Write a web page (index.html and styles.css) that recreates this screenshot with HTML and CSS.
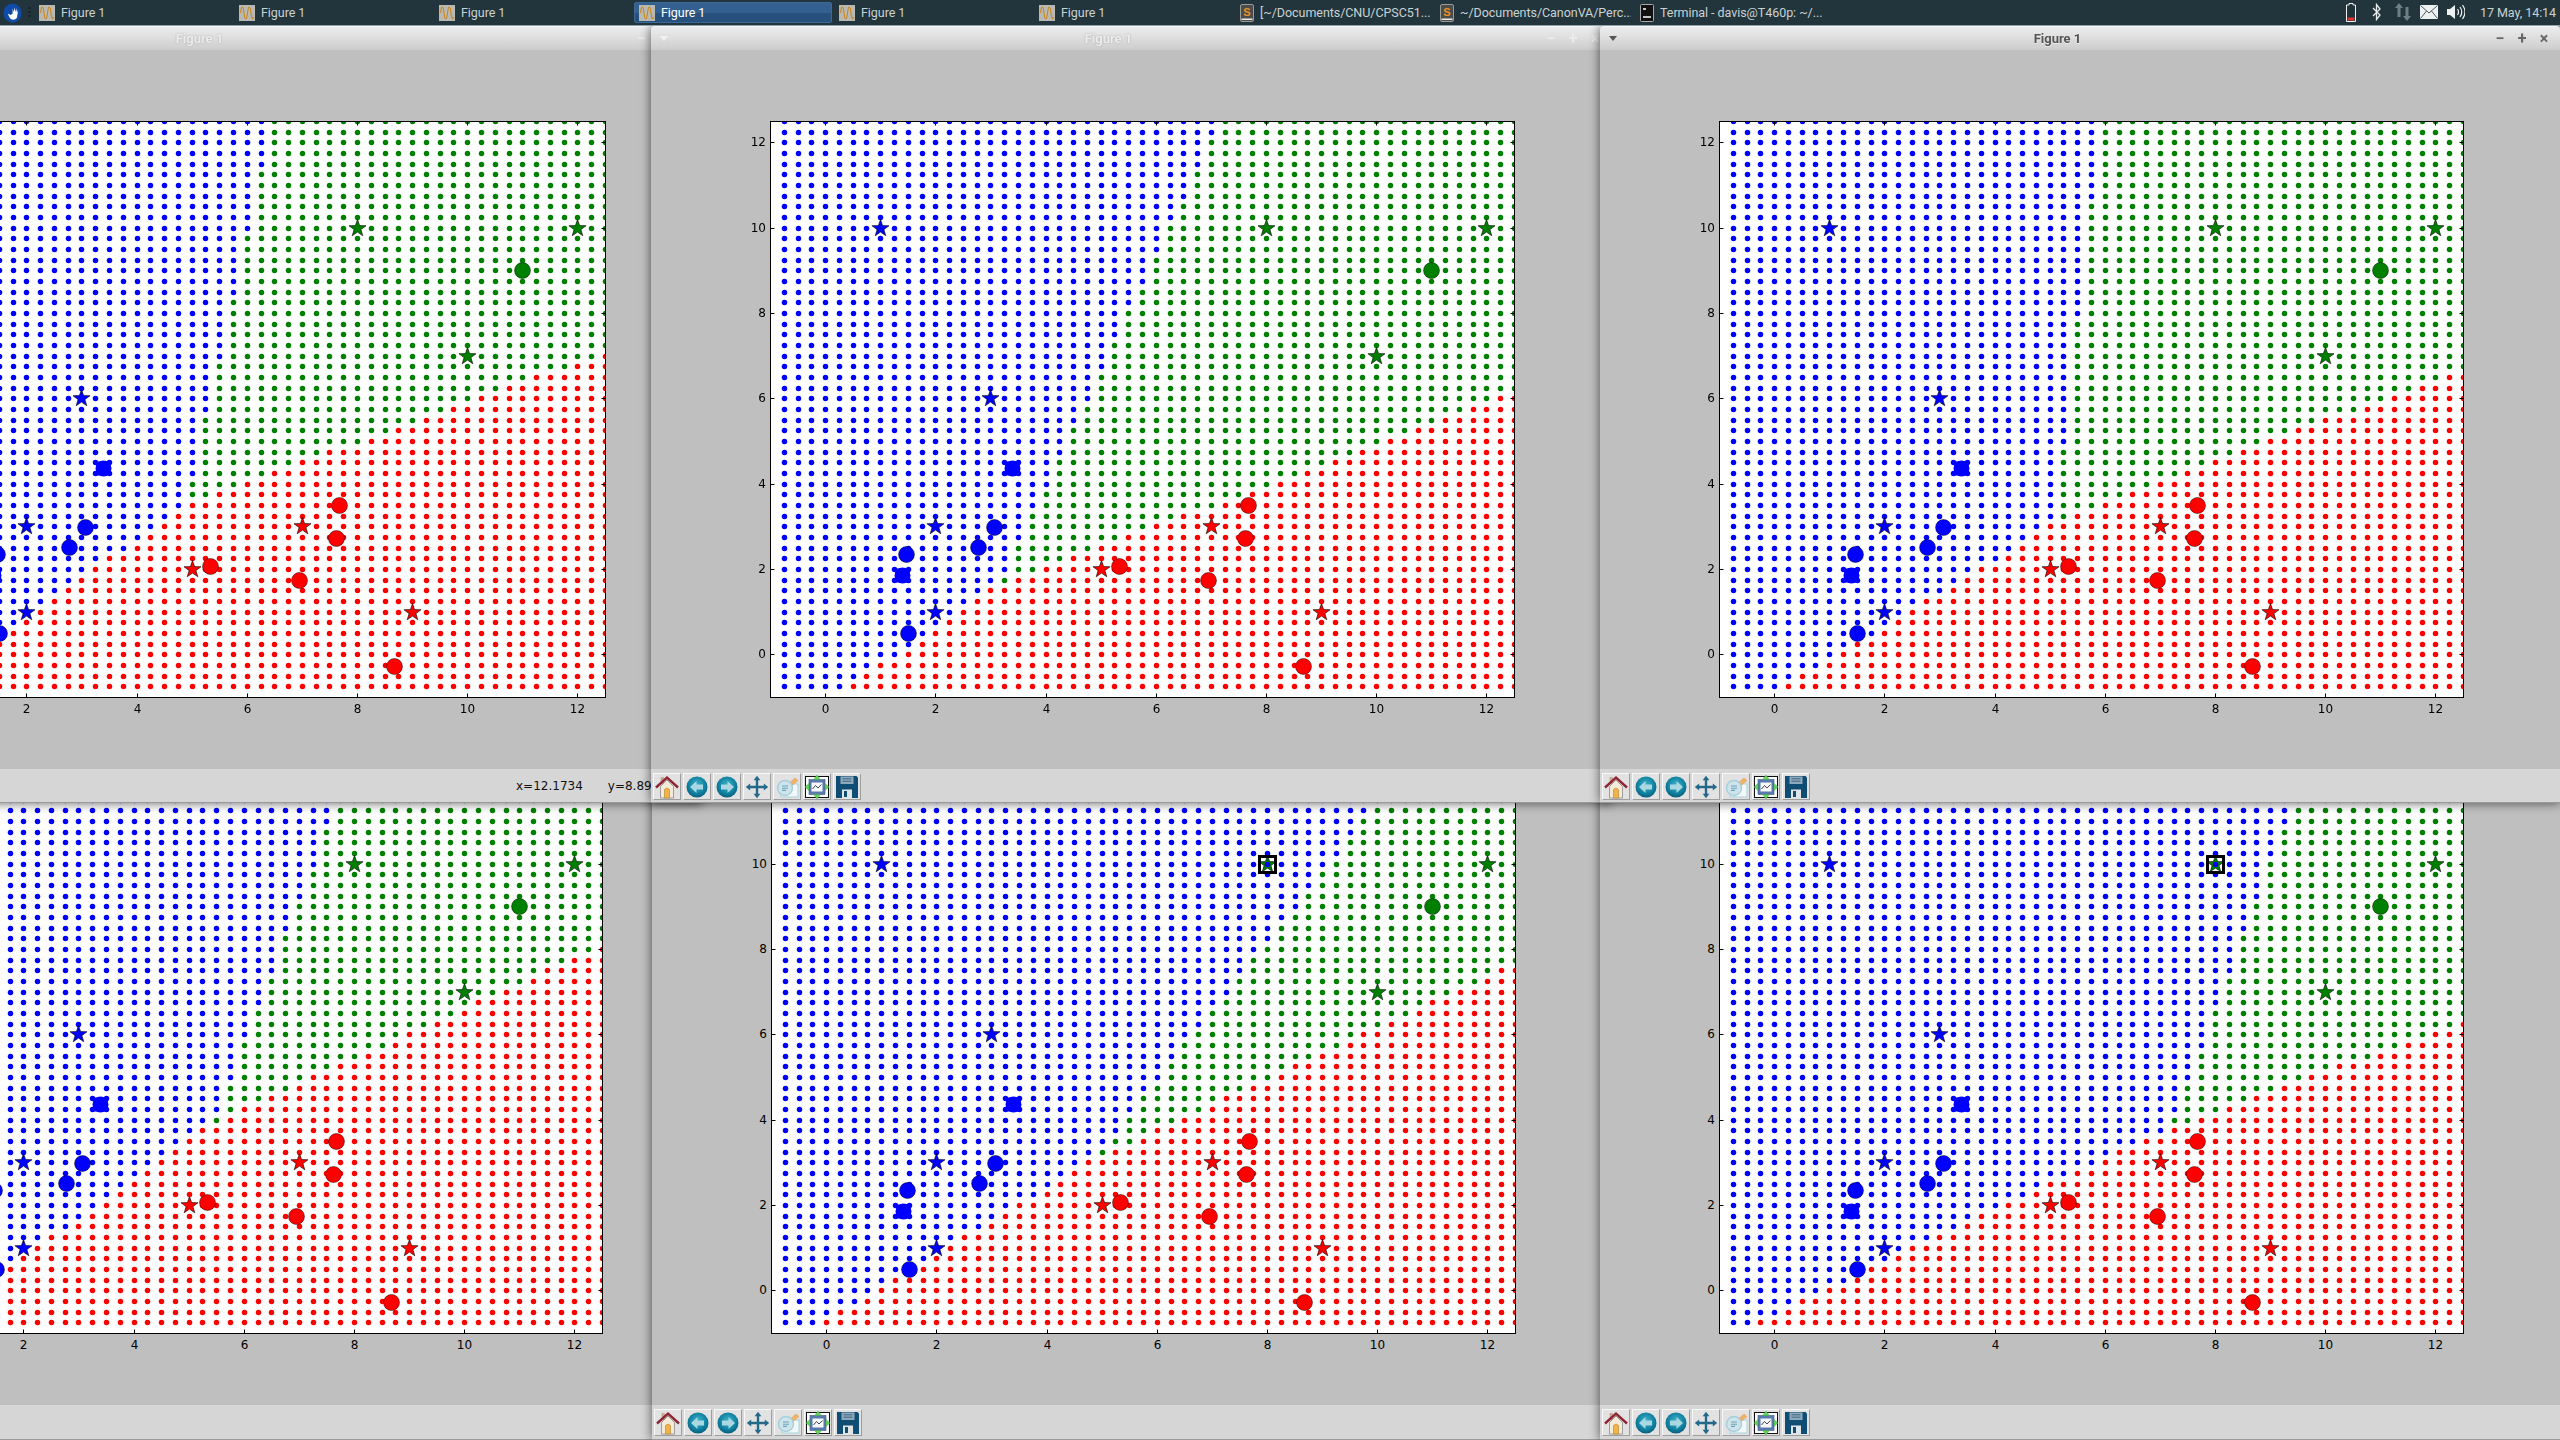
FILE: index.html
```html
<!DOCTYPE html>
<html lang="en">
<head>
<meta charset="utf-8">
<title>Desktop</title>
<link rel="stylesheet" href="styles.css">
</head>
<body>
<svg class="defs" width="0" height="0" aria-hidden="true">
  <defs>
    <radialGradient id="orb" cx="50%" cy="40%" r="60%"><stop offset="0" stop-color="#3fb4cc"/><stop offset=".7" stop-color="#0e7f9e"/><stop offset="1" stop-color="#0b5f7c"/></radialGradient>
    <symbol id="i-home" viewBox="0 0 24 24">
      <rect x="6" y="2.5" width="2.5" height="6" fill="#d9a58a" stroke="#a98" stroke-width=".5"/>
      <path d="M5.5 11.5V23h13V11.5L12 5z" fill="#f4ead8" stroke="#8a8a88" stroke-width=".8"/>
      <path d="M9.5 23V14.5q2.5-3 5 0V23z" fill="#f2b24a" stroke="#b5812f" stroke-width=".6"/>
      <path d="M1 12.5L12 2.5l11 10" fill="none" stroke="#8f2434" stroke-width="2.4"/>
    </symbol>
    <symbol id="i-back" viewBox="0 0 24 24">
      <circle cx="12" cy="12" r="10.5" fill="url(#orb)"/>
      <path d="M5 12l6.500-6v3.500H18v5h-6.500V18z" fill="#a9d8e3"/>
    </symbol>
    <symbol id="i-forward" viewBox="0 0 24 24">
      <circle cx="12" cy="12" r="10.5" fill="url(#orb)"/>
      <path d="M19 12l-6.500-6v3.500H6v5h6.500V18z" fill="#a9d8e3"/>
    </symbol>
    <symbol id="i-move" viewBox="0 0 24 24">
      <path d="M12 .8l3.4 4.4h-2.2v5.6h5.6V8.6L23.2 12l-4.4 3.4v-2.2h-5.6v5.6h2.2L12 23.2l-3.4-4.4h2.2v-5.6H5.2v2.2L.8 12l4.4-3.4v2.2h5.6V5.2H8.6z" fill="#24688a"/>
    </symbol>
    <symbol id="i-zoom" viewBox="0 0 24 24">
      <rect x="6" y="9" width="17" height="13" fill="#f3f7f8" stroke="#a5d2de" stroke-width="1"/>
      <path d="M13 9l7-6 3 2.5-7 6z" fill="#f0b26a" stroke="#e29a4c" stroke-width=".5"/>
      <circle cx="10" cy="13" r="7.5" fill="#cfe3ea" stroke="#a5cfdc" stroke-width="1.4"/>
      <path d="M7 11h6M7 13.2h6M7 15.4h4" stroke="#6aa4ba" stroke-width="1.1"/>
    </symbol>
    <symbol id="i-subplots" viewBox="0 0 24 24">
      <rect x=".5" y="1.5" width="23" height="21" fill="#fff" stroke="#111" stroke-width="1"/>
      <rect x="4" y="4.5" width="16" height="15" fill="#5a79ad" stroke="#3e5a8c" stroke-width=".6"/>
      <rect x="6.5" y="7.5" width="11" height="9" fill="#f5f7fa"/>
      <path d="M7.5 14l3-3.5 2.5 2.5 3.5-3.5" fill="none" stroke="#333" stroke-width=".9"/>
      <path d="M12 0l3.4 4.5H8.600zM12 24l3.400-4.500H8.600zM0 12l4-3.400v6.800zM24 12l-4-3.400v6.800z" fill="#62d35c" stroke="#3f9e3a" stroke-width=".4"/>
    </symbol>
    <symbol id="i-save" viewBox="0 0 24 24">
      <path d="M1 1h20.500L23 2.500V23H1z" fill="#0f4d75"/>
      <rect x="5.500" y="1.500" width="13" height="7.500" fill="#8fa9bc"/>
      <path d="M7.500 3.800h9M7.500 6.200h9" stroke="#3e6683" stroke-width="1"/>
      <rect x="7" y="14.500" width="10" height="8.500" fill="#dfe4e7"/>
      <rect x="9" y="16" width="3" height="6" fill="#0f4d75"/>
    </symbol>
    <symbol id="i-wave" viewBox="0 0 16 16">
      <rect width="16" height="16" fill="#b9b9b4"/>
      <path d="M1.500 8C2.500 0 4 0 5 8s2.500 8 3.500 0 2.500-8 3.500 0 2 6 2.500 4" fill="none" stroke="#cf8410" stroke-width="1.100"/>
    </symbol>
    <symbol id="i-sublime" viewBox="0 0 14 18">
      <rect x=".5" y=".5" width="13" height="17" rx="1.500" fill="#4c4c48" stroke="#9a9a96"/>
      <rect x="1.500" y="14.500" width="11" height="1.500" fill="#e8e8e8"/>
      <text x="7" y="12" class="sub-s" text-anchor="middle">S</text>
    </symbol>
  </defs>
</svg>

<main class="desktop">

  <section class="win w4">
    <header class="titlebar inactive"><span class="menu"></span><span class="wtitle">Figure 1</span><span class="controls"><span>−</span><span>+</span><span>×</span></span></header>
    <div class="figure"><div class="axes" data-plot="4"><canvas width="745" height="577"></canvas></div></div>
    <footer class="toolbar">
      <button class="tool"><svg><use href="#i-home"/></svg></button><button class="tool"><svg><use href="#i-back"/></svg></button><button class="tool"><svg><use href="#i-forward"/></svg></button><button class="tool"><svg><use href="#i-move"/></svg></button><button class="tool"><svg><use href="#i-zoom"/></svg></button><button class="tool"><svg><use href="#i-subplots"/></svg></button><button class="tool"><svg><use href="#i-save"/></svg></button>
    </footer>
  </section>

  <section class="win w5">
    <header class="titlebar inactive"><span class="menu"></span><span class="wtitle">Figure 1</span><span class="controls"><span>−</span><span>+</span><span>×</span></span></header>
    <div class="figure"><div class="axes" data-plot="5"><canvas width="745" height="577"></canvas></div></div>
    <footer class="toolbar">
      <button class="tool"><svg><use href="#i-home"/></svg></button><button class="tool"><svg><use href="#i-back"/></svg></button><button class="tool"><svg><use href="#i-forward"/></svg></button><button class="tool"><svg><use href="#i-move"/></svg></button><button class="tool"><svg><use href="#i-zoom"/></svg></button><button class="tool"><svg><use href="#i-subplots"/></svg></button><button class="tool"><svg><use href="#i-save"/></svg></button>
    </footer>
  </section>

  <section class="win w6">
    <header class="titlebar inactive"><span class="menu"></span><span class="wtitle">Figure 1</span><span class="controls"><span>−</span><span>+</span><span>×</span></span></header>
    <div class="figure"><div class="axes" data-plot="6"><canvas width="745" height="577"></canvas></div></div>
    <footer class="toolbar">
      <button class="tool"><svg><use href="#i-home"/></svg></button><button class="tool"><svg><use href="#i-back"/></svg></button><button class="tool"><svg><use href="#i-forward"/></svg></button><button class="tool"><svg><use href="#i-move"/></svg></button><button class="tool"><svg><use href="#i-zoom"/></svg></button><button class="tool"><svg><use href="#i-subplots"/></svg></button><button class="tool"><svg><use href="#i-save"/></svg></button>
    </footer>
  </section>

  <section class="win w1">
    <header class="titlebar inactive"><span class="menu"></span><span class="wtitle">Figure 1</span><span class="controls"><span>−</span><span>+</span><span>×</span></span></header>
    <div class="figure"><div class="axes" data-plot="1"><canvas width="745" height="577"></canvas></div></div>
    <footer class="toolbar">
      <button class="tool"><svg><use href="#i-home"/></svg></button><button class="tool"><svg><use href="#i-back"/></svg></button><button class="tool"><svg><use href="#i-forward"/></svg></button><button class="tool"><svg><use href="#i-move"/></svg></button><button class="tool"><svg><use href="#i-zoom"/></svg></button><button class="tool"><svg><use href="#i-subplots"/></svg></button><button class="tool"><svg><use href="#i-save"/></svg></button>
      <span class="coords"><span class="coord-x">x=12.1734</span><span>y=8.8970</span></span>
    </footer>
  </section>

  <section class="win w2">
    <header class="titlebar inactive"><span class="menu"></span><span class="wtitle">Figure 1</span><span class="controls"><span>−</span><span>+</span><span>×</span></span></header>
    <div class="figure"><div class="axes" data-plot="2"><canvas width="745" height="577"></canvas></div></div>
    <footer class="toolbar">
      <button class="tool"><svg><use href="#i-home"/></svg></button><button class="tool"><svg><use href="#i-back"/></svg></button><button class="tool"><svg><use href="#i-forward"/></svg></button><button class="tool"><svg><use href="#i-move"/></svg></button><button class="tool"><svg><use href="#i-zoom"/></svg></button><button class="tool"><svg><use href="#i-subplots"/></svg></button><button class="tool"><svg><use href="#i-save"/></svg></button>
    </footer>
  </section>

  <section class="win w3">
    <header class="titlebar"><span class="menu"></span><span class="wtitle">Figure 1</span><span class="controls"><span>−</span><span>+</span><span>×</span></span></header>
    <div class="figure"><div class="axes" data-plot="3"><canvas width="745" height="577"></canvas></div></div>
    <footer class="toolbar">
      <button class="tool"><svg><use href="#i-home"/></svg></button><button class="tool"><svg><use href="#i-back"/></svg></button><button class="tool"><svg><use href="#i-forward"/></svg></button><button class="tool"><svg><use href="#i-move"/></svg></button><button class="tool"><svg><use href="#i-zoom"/></svg></button><button class="tool"><svg><use href="#i-subplots"/></svg></button><button class="tool"><svg><use href="#i-save"/></svg></button>
    </footer>
  </section>

  <nav class="panel">
    <svg class="logo" viewBox="0 0 20 20"><ellipse cx="10" cy="10" rx="9.500" ry="10" fill="#0f4ba6"/><path d="M5 10.500l2 4.500q1 2 4 2 4 0 4-4l1-6.500-1.300 3-.7-4.500-1 4-.8-5-1 5-1.200-4 .2 5.500L8 12z" fill="#fff"/></svg>
    <span class="grip"></span>
    <div class="tasks">
      <a class="task"><svg class="task-icon"><use href="#i-wave"/></svg><span>Figure 1</span></a>
      <a class="task"><svg class="task-icon"><use href="#i-wave"/></svg><span>Figure 1</span></a>
      <a class="task"><svg class="task-icon"><use href="#i-wave"/></svg><span>Figure 1</span></a>
      <a class="task active"><svg class="task-icon"><use href="#i-wave"/></svg><span>Figure 1</span></a>
      <a class="task"><svg class="task-icon"><use href="#i-wave"/></svg><span>Figure 1</span></a>
      <a class="task"><svg class="task-icon"><use href="#i-wave"/></svg><span>Figure 1</span></a>
      <a class="task"><svg class="task-icon-s"><use href="#i-sublime"/></svg><span>[~/Documents/CNU/CPSC51...</span></a>
      <a class="task"><svg class="task-icon-s"><use href="#i-sublime"/></svg><span>~/Documents/CanonVA/Perc...</span></a>
      <a class="task"><svg class="task-icon-s" viewBox="0 0 14 18"><rect x=".5" y=".5" width="13" height="17" rx="1" fill="#111" stroke="#aaa"/><path d="M3 5h3M3 13h8" stroke="#fff" stroke-width="1.500"/></svg><span>Terminal - davis@T460p: ~/...</span></a>
    </div>
    <div class="tray">
      <svg class="t-batt" viewBox="0 0 10 19"><path d="M3 .5h4V2h2.500v16.500H.5V2H3z" fill="#1f3339" stroke="#f0f0f0"/><rect x="1.500" y="14.500" width="7" height="3" fill="#e0322e"/></svg>
      <svg class="t-bt" viewBox="0 0 9 18"><path d="M1 5l7 7-3.500 4.500V1.500L8 6l-7 7" fill="none" stroke="#e8ecec" stroke-width="1.300"/></svg>
      <svg class="t-net" viewBox="0 0 18 18"><path d="M5 0l4 5H6.500v9h-3V5H1z" fill="#6f7f84"/><path d="M13 18l4-5h-2.500V4h-3v9H9z" fill="#6f7f84"/></svg>
      <svg class="t-mail" viewBox="0 0 18 14"><rect width="18" height="14" fill="#eef1f1"/><path d="M.5.5L9 8l8.500-7.500M.5 13.500L6.500 6M17.500 13.500L11.500 6" fill="none" stroke="#4a5a60"/></svg>
      <svg class="t-vol" viewBox="0 0 19 18"><path d="M1 6h3l5-4v14l-5-4H1z" fill="#eef1f1"/><path d="M11.500 6q2 3 0 6M14 4q3.500 5 0 10M16.500 2q5 7 0 14" fill="none" stroke="#eef1f1" stroke-width="1.200"/></svg>
      <time class="clock">17 May, 14:14</time>
    </div>
  </nav>
</main>
<script src="plots.js"></script>
</body>
</html>
```
FILE: styles.css
```css
* { box-sizing: border-box; }
html, body { margin: 0; padding: 0; height: 100%; overflow: hidden; background: #bfbfbf; }
.defs { position: absolute; }
.desktop { position: relative; width: 2560px; height: 1440px; overflow: hidden; font-family: Roboto, "Noto Sans", sans-serif; }
.sub-s { font: bold 11px "Liberation Sans", sans-serif; fill: #e8912a; }

/* panel */
.panel { position: absolute; left: 0; top: 0; width: 2560px; height: 26px; background: #22353d; display: flex; align-items: center; color: #c9d2d3; font-size: 12.5px; letter-spacing: -.05px; border-bottom: 1px solid #8fa3a8; }
.logo { width: 19px; height: 20px; margin-left: 3px; flex: none; }
.grip { width: 3px; height: 12px; margin: 0 4px 0 6px; flex: none; background: repeating-linear-gradient(#16262c 0 2px, transparent 2px 4px); }
.tasks { display: flex; gap: 2px; flex: none; margin-left: -1px; }
.task { width: 198px; height: 21px; display: flex; align-items: center; gap: 6px; padding-left: 4px; white-space: nowrap; overflow: hidden; border: 1px solid transparent; }
.task.active { background: linear-gradient(#33608f 0 55%, #28507c 55% 100%); border-color: #3c6a98; border-radius: 2px; color: #fff; }
.task-icon { width: 16px; height: 16px; flex: none; }
.task-icon-s { width: 14px; height: 18px; flex: none; margin-left: 1px; }
.tray { position: absolute; right: 3px; top: 0; height: 24px; display: flex; align-items: center; }
.t-batt { width: 10px; height: 19px; margin-right: 16px; }
.t-bt { width: 9px; height: 18px; margin-right: 13px; }
.t-net { width: 18px; height: 18px; margin-right: 8px; }
.t-mail { width: 18px; height: 14px; margin-right: 8px; }
.t-vol { width: 19px; height: 18px; margin-right: 15px; }
.clock { font-size: 12.5px; color: #c9d2d3; width: 77px; white-space: nowrap; }

/* windows */
.win { position: absolute; width: 960px; display: flex; flex-direction: column; box-shadow: 0 0 11px rgba(0,0,0,.62); background: #bfbfbf; border-radius: 4px 4px 0 0; }
.w1 { left: -258px; top: 26px; height: 777px; }
.w2 { left: 651px; top: 26px; height: 777px; }
.w3 { left: 1600px; top: 26px; height: 777px; }
.w4 { left: -261px; top: 662px; height: 778px; }
.w5 { left: 652px; top: 662px; height: 778px; }
.w6 { left: 1600px; top: 662px; height: 778px; }

.titlebar { flex: none; height: 24px; display: flex; align-items: center; background: linear-gradient(#ededed, #d0d0d0 90%, #cbcbcb); border-top: 1px solid #f7f7f7; border-radius: 4px 4px 0 0; color: #565656; font-weight: 700; font-size: 13px; }
.menu { width: 26px; flex: none; display: flex; justify-content: center; }
.menu::before { content: ""; border-style: solid; border-width: 5px 4px 0; border-color: #555 transparent transparent; }
.wtitle { width: 863px; flex: none; text-align: center; text-shadow: 0 1px 0 rgba(255,255,255,.5); }
.controls { display: flex; flex: none; }
.controls span { width: 22px; text-align: center; font-size: 16px; color: #666; line-height: 1; }
.inactive, .inactive .controls span { color: #ececec; }
.inactive .menu::before { border-top-color: #f2f2f2; }
.inactive .wtitle { text-shadow: 0 0 2px #a8a8a8; }

.figure { flex: none; height: 719px; padding: 71px 0 0 119px; background: #bfbfbf; }
.axes { position: relative; width: 745px; height: 577px; }
.axes canvas { display: block; }
.tick { position: absolute; font: 12px/14px "DejaVu Sans", sans-serif; color: #000; white-space: nowrap; }
.tick-x { top: 581px; transform: translateX(-50%); }
.tick-y { right: 749px; margin-top: -1px; transform: translateY(-50%); }

.toolbar { flex: 1; min-height: 0; background: #d6d6d6; display: flex; align-items: flex-start; padding: 4px 0 0 2px; gap: 2px; position: relative; border-bottom: 1px solid #9a9a9a; }
.tool { width: 28px; height: 27px; padding: 0; flex: none; background: #e2e2e2; border: 1px solid; border-color: #f8f8f8 #9e9e9e #9e9e9e #f8f8f8; display: flex; align-items: center; justify-content: center; }
.tool svg { width: 24px; height: 24px; display: block; }
.coords { margin-left: 562px; display: flex; gap: 25px; font: 12px/27px "DejaVu Sans", sans-serif; color: #111; white-space: nowrap; }
```
FILE: plots.js
```js
(function () {
  var W = 744, H = 576;
  var plots = {
    1: { jx: 4.9,  jy: 3.55, bg: .175, br: 1.08,  gr: .466 },
    2: { jx: 3.15, jy: 1.65, bg: .37,  br: 1.143, gr: .48 },
    3: { jx: 5.1,  jy: 3.1,  bg: .085, br: 1.286, gr: .49 },
    4: { jx: 5.45, jy: 3.95, bg: .30,  br: 1.10,  gr: .589 },
    5: { jx: 4.85, jy: 3.1,  bg: .62,  br: 1.286, gr: .6, mark: true },
    6: { jx: 7.2,  jy: 3.85, bg: .29,  br: 1.65,  gr: .46, mark: true }
  };
  var BLUE = '#0000ff', GREEN = '#008000', RED = '#ff0000';
  var circles = [
    [1.51, .49, BLUE], [1.47, 2.34, BLUE], [2.78, 2.52, BLUE], [3.06, 2.98, BLUE],
    [5.34, 2.08, RED], [7.67, 3.49, RED], [7.62, 2.73, RED], [6.95, 1.75, RED], [8.67, -.265, RED],
    [10.99, 9, GREEN]
  ];
  var squares = [[3.4, 4.37], [1.4, 1.85]];
  var stars = [
    [1, 10, BLUE], [3, 6, BLUE], [2, 3, BLUE], [2, 1, BLUE],
    [5, 2, RED], [7, 3, RED], [9, 1, RED],
    [8, 10, GREEN], [12, 10, GREEN], [10, 7, GREEN]
  ];
  function X(x) { return Math.round((x + 1) * W / 13.5) + .5; }
  function Y(y) { return Math.round((12.5 - y) * H / 13.5) + .5; }
  function classify(p, x, y) {
    if (y >= p.jy) {
      if (x < p.jx + (y - p.jy) * p.bg) return BLUE;
      return y > p.jy + (x - p.jx) * p.gr ? GREEN : RED;
    }
    return x < p.jx + (y - p.jy) * p.br ? BLUE : RED;
  }
  function dot(c, x, y, r, fill) {
    c.fillStyle = fill;
    c.beginPath(); c.arc(x, y, r, 0, Math.PI * 2); c.fill();
  }
  function star(c, cx, cy, fill) {
    var R = 9, r = 3.6;
    c.beginPath();
    for (var i = 0; i < 10; i++) {
      var a = -Math.PI / 2 + i * Math.PI / 5, q = i % 2 ? r : R;
      c[i ? 'lineTo' : 'moveTo'](cx + q * Math.cos(a), cy + q * Math.sin(a));
    }
    c.closePath();
    c.fillStyle = fill; c.fill();
    c.strokeStyle = 'rgba(0,0,0,.75)'; c.lineWidth = .8; c.stroke();
  }
  function label(box, cls, text, prop, value) {
    var el = document.createElement('div');
    el.className = 'tick ' + cls;
    el.textContent = text;
    el.style[prop] = value + 'px';
    box.appendChild(el);
  }
  document.querySelectorAll('.axes').forEach(function (box) {
    var p = plots[box.dataset.plot];
    var c = box.querySelector('canvas').getContext('2d');
    c.fillStyle = '#fff'; c.fillRect(0, 0, 745, 577);
    c.save();
    c.beginPath(); c.rect(.5, .5, W, H); c.clip();
    for (var j = 0; j < 54; j++) {
      for (var i = 0; i < 54; i++) {
        var x = -.75 + .25 * i, y = 12.5 - .25 * j;
        dot(c, X(x), Y(y), 2.75, classify(p, x, y));
      }
    }
    stars.forEach(function (s) { star(c, X(s[0]), Y(s[1]), s[2]); });
    circles.forEach(function (s) {
      dot(c, X(s[0]), Y(s[1]), 8, s[2]);
      c.strokeStyle = 'rgba(0,0,0,.55)'; c.lineWidth = .8; c.stroke();
    });
    squares.forEach(function (s) {
      c.fillStyle = BLUE;
      c.fillRect(X(s[0]) - 7, Y(s[1]) - 7, 14, 14);
      dot(c, X(s[0]), Y(s[1]), 8, BLUE);
    });
    if (p.mark) {
      var mx = X(8), my = Y(10);
      c.strokeStyle = '#000'; c.lineWidth = 3;
      c.strokeRect(mx - 8, my - 8, 16, 16);
      dot(c, mx, my, 2.75, BLUE);
    }
    c.restore();
    c.strokeStyle = '#000'; c.lineWidth = 1;
    c.strokeRect(.5, .5, W, H);
    c.beginPath();
    for (var t = 0; t <= 12; t += 2) {
      var tx = X(t), ty = Y(t);
      c.moveTo(tx, .5); c.lineTo(tx, 4.5);
      c.moveTo(tx, H + .5); c.lineTo(tx, H - 3.5);
      c.moveTo(.5, ty); c.lineTo(4.5, ty);
      c.moveTo(W + .5, ty); c.lineTo(W - 3.5, ty);
      label(box, 'tick-x', String(t), 'left', tx);
      label(box, 'tick-y', String(t), 'top', ty);
    }
    c.stroke();
  });
})();
```
